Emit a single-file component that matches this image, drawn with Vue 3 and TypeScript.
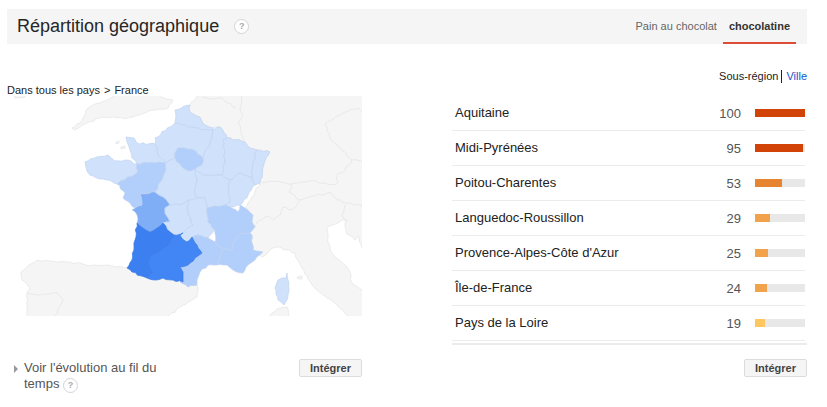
<script setup lang="ts">
interface Row { name: string; value: number; color: string }

const rows: Row[] = [
  { name: 'Aquitaine', value: 100, color: '#d14306' },
  { name: 'Midi-Pyrénées', value: 95, color: '#d14306' },
  { name: 'Poitou-Charentes', value: 53, color: '#e78432' },
  { name: 'Languedoc-Roussillon', value: 29, color: '#f2a24a' },
  { name: "Provence-Alpes-Côte d'Azur", value: 25, color: '#f2a24a' },
  { name: 'Île-de-France', value: 24, color: '#f2a24a' },
  { name: 'Pays de la Loire', value: 19, color: '#fdc660' },
]

// breaks a straight edge into small steps so coasts and borders look hand drawn.
// offsets depend only on the two end points, so neighbouring regions share the same edge
function rough(points: string, closed = true, amp = 1): string {
  const pts = points.split(' ').map((p) => p.split(',').map(Number))
  const out: string[] = []
  const last = closed ? pts.length : pts.length - 1
  for (let i = 0; i < last; i++) {
    const a = pts[i]
    const b = pts[(i + 1) % pts.length]
    out.push(a.join(','))
    const forward = a[0] < b[0] || (a[0] === b[0] && a[1] < b[1])
    const [p, q] = forward ? [a, b] : [b, a]
    const dx = q[0] - p[0]
    const dy = q[1] - p[1]
    const len = Math.hypot(dx, dy)
    const n = Math.floor(len / 3)
    const mids: string[] = []
    for (let k = 1; k < n; k++) {
      const s = Math.sin(p[0] * 12.9 + p[1] * 78.2 + q[0] * 37.7 + q[1] * 11.1 + k * 3.3) * 43758.5
      const off = (s - Math.floor(s) - 0.5) * 2 * amp
      const x = p[0] + (dx * k) / n - (dy / len) * off
      const y = p[1] + (dy * k) / n + (dx / len) * off
      mids.push(x.toFixed(1) + ',' + y.toFixed(1))
    }
    out.push(...(forward ? mids : mids.reverse()))
  }
  if (!closed) out.push(pts[pts.length - 1].join(','))
  return out.join(' ')
}

// coordinates are page pixels, the svg viewBox starts at the map's corner
const land = [
  '13,92 25,92 25,97 15,98',
  '113,92 160,92 160,97 173,100 168,108 147,112 133,117 117,118 103,117 87,123 75,130 72,128 80,123 88,108 100,103 113,97',
  '202,92 370,92 370,250 362,248 358,236 355,240 347,234 345,223 347,220 342,220 333,225 327,228 328,238 330,250 335,257 345,265 350,272 352,283 362,290 370,292 370,322 352,322 343,310 327,298 312,285 302,268 295,253 280,247 273,248 262,257 253,250 252,235 250,233 255,227 252,222 253,215 245,208 260,183 263,167 270,152 250,148 245,142 227,138 220,127 213,128 205,125 200,117 190,112 190,105',
  '37,260 70,262 90,266 107,265 127,268 132,272 147,278 155,280 163,278 173,280 183,282 188,287 197,285 198,288 197,297 180,307 162,322 28,322 27,293 30,288 22,280 21,272',
  '268,322 270,315 277,309 287,307 292,322',
  '116,142 119,141 119,143 116,144',
  '121,147 125,146 125,148 121,149',
  '297,277 302,276 302,279 298,279',
].map((p) => rough(p))

const borders = [
  '242,96 240,108 243,115 238,122 241,132 245,142',
  '202,97 212,99 222,98 236,108',
  '325,124 345,112 358,108 362,112',
  '325,124 330,138 340,148 352,160 362,161',
  '352,160 345,170 336,176 338,182 335,185 310,181 292,184',
  '292,184 272,181 262,183',
  '292,184 289,192 300,200 330,192 337,200 362,206',
  '300,200 296,207 292,210 283,207 280,215 273,220 268,216 257,222 255,227',
  '345,205 342,215 347,222',
  '27,293 37,295 57,293 63,300 55,316',
].map((p) => rough(p, false))

const tints: Record<string, string> = {
  light: '#d0e1fc',
  mid: '#b2cefb',
  strong: '#7fadf6',
  full: '#3b7ff0',
  high: '#4285f4',
}

const regions: { tint: string; points: string }[] = [
  { tint: 'light', points: '175,110 190,105 190,112 200,117 205,125 213,128 213,130 195,128 175,123' },
  { tint: 'light', points: '155,138 173,125 175,123 195,128 213,130 212,138 203,158 193,150 178,148 175,153 175,158 166,163 158,155 155,144' },
  { tint: 'light', points: '126,137 134,138 137,143 155,144 158,155 166,163 155,163 147,163 137,164 132,158 130,150 127,142' },
  { tint: 'light', points: '85,162 97,157 108,155 115,161 125,160 137,164 138,172 117,184 107,180 103,179 90,175 86,167' },
  { tint: 'mid', points: '137,164 147,163 155,163 166,163 166,170 160,182 155,192 140,194 142,205 135,208 123,198 125,193 117,184 138,172' },
  { tint: 'light', points: '166,163 175,158 182,167 190,171 195,169 197,182 195,192 197,198 188,200 180,205 170,205 163,197 155,192 160,182 166,170' },
  { tint: 'mid', points: '175,153 178,148 193,150 203,158 202,165 195,169 190,171 182,167 175,158' },
  { tint: 'light', points: '213,130 220,127 227,138 223,140 225,160 222,175 217,175 203,175 195,169 202,165 203,158 212,138' },
  { tint: 'light', points: '223,140 227,138 245,142 250,148 257,150 253,162 252,178 240,173 230,180 222,175 225,160' },
  { tint: 'light', points: '257,150 270,152 263,167 260,183 255,185 252,178 253,162' },
  { tint: 'light', points: '195,169 203,175 217,175 222,175 230,180 228,192 230,202 225,205 207,208 205,198 197,198 195,192 197,182' },
  { tint: 'light', points: '230,180 240,173 252,178 255,185 248,195 240,205 230,207 225,205 230,202 228,192' },
  { tint: 'strong', points: '140,194 155,192 163,197 170,205 165,208 165,213 170,222 163,223 157,228 150,232 143,228 137,223 137,215 132,210 135,208 142,205' },
  { tint: 'light', points: '170,205 180,205 188,200 188,213 193,225 183,233 174,235 170,232 163,223 170,222 165,213 165,208' },
  { tint: 'light', points: '188,200 197,198 205,198 207,208 207,213 208,222 215,230 208,238 197,235 192,237 187,242 180,235 183,233 193,225 188,213' },
  { tint: 'mid', points: '207,208 225,205 230,207 238,212 240,205 245,208 253,215 252,222 255,227 250,233 242,233 233,242 233,250 222,248 215,242 215,230 208,222 207,213' },
  { tint: 'mid', points: '250,233 252,235 253,250 263,252 255,260 248,265 243,273 233,270 227,265 217,265 222,248 233,250 233,242 242,233' },
  { tint: 'mid', points: '197,235 208,238 215,242 222,248 217,265 208,265 200,272 197,280 197,285 188,287 180,282 183,280 183,272 180,267 188,265 195,258 202,253 197,245 192,237' },
  { tint: 'full', points: '137,223 143,228 150,232 157,228 163,223 170,232 174,235 168,245 157,253 150,257 148,263 153,272 147,278 132,272 127,268 132,260 135,240' },
  { tint: 'high', points: '174,235 183,233 180,235 187,242 192,237 197,245 202,253 195,258 188,265 180,267 183,272 183,280 183,282 173,280 163,278 155,280 147,278 153,272 148,263 150,257 157,253 168,245' },
  { tint: 'light', points: '287,273 289,283 288,295 284,305 278,300 275,288 278,280 286,278' },
]

const regionShapes = regions.map((r) => ({ tint: r.tint, points: rough(r.points) }))
</script>

<template>
  <div class="page">
    <header class="head">
      <h2 class="head__title">Répartition géographique</h2>
      <span class="help help--head">?</span>
      <nav class="tabs">
        <span class="tab">Pain au chocolat</span>
        <span class="tab tab--on">chocolatine</span>
      </nav>
    </header>

    <div class="cols">
      <section class="left">
        <div class="crumb">Dans tous les pays<span class="crumb__sep">&gt;</span>France</div>
        <svg class="map" viewBox="7 96 355 220" width="355" height="220">
          <polygon v-for="(p, i) in land" :key="'l' + i" :points="p" fill="#f5f5f5" stroke="#e6e6e6" stroke-width="0.8" />
          <polyline v-for="(p, i) in borders" :key="'b' + i" :points="p" fill="none" stroke="#e4e4e4" stroke-width="0.8" />
          <polygon
            v-for="(r, i) in regionShapes"
            :key="'r' + i"
            :points="r.points"
            :fill="tints[r.tint]"
            :stroke="r.tint === 'full' || r.tint === 'high' ? '#3a7ae6' : '#c0d2ef'"
            stroke-width="0.7"
          />
        </svg>
        <div class="foot">
          <div class="evo">
            <span class="evo__arrow"></span>
            <span class="evo__text">Voir l'évolution au fil du temps <span class="help help--evo">?</span></span>
          </div>
          <button class="embed">Intégrer</button>
        </div>
      </section>

      <section class="right">
        <div class="switch">
          <span class="switch__on">Sous-région</span>
          <span class="switch__link">Ville</span>
        </div>
        <ul class="list">
          <li v-for="row in rows" :key="row.name" class="row">
            <span class="row__name">{{ row.name }}</span>
            <span class="row__value">{{ row.value }}</span>
            <span class="row__track">
              <span class="row__fill" :style="{ width: row.value + '%', background: row.color }"></span>
            </span>
          </li>
        </ul>
        <div class="list-end"></div>
        <div class="foot foot--right">
          <button class="embed">Intégrer</button>
        </div>
      </section>
    </div>
  </div>
</template>

<style scoped>
.page {
  width: 827px;
  height: 407px;
  overflow: hidden;
  padding-top: 9px;
  box-sizing: border-box;
  font-family: "Liberation Sans", Arial, sans-serif;
  color: #222;
  background: #fff;
}

.head {
  display: flex;
  align-items: center;
  width: 800px;
  height: 35px;
  margin-left: 7px;
  background: #f5f5f5;
}

.head__title {
  margin: 0 0 0 10px;
  font-size: 18px;
  font-weight: 400;
  color: #262626;
}

.help {
  display: inline-block;
  box-sizing: border-box;
  width: 15px;
  height: 15px;
  border: 1px solid #d4d4d4;
  border-radius: 50%;
  background: #fff;
  color: #aaa;
  font-size: 9px;
  font-weight: 700;
  line-height: 13px;
  text-align: center;
}

.help--head {
  margin-left: 15px;
}

.tabs {
  display: flex;
  height: 100%;
  margin-left: auto;
  margin-right: 11px;
}

.tab {
  padding: 0 6px;
  font-size: 11px;
  line-height: 35px;
  color: #666;
}

.tab--on {
  box-sizing: border-box;
  height: 35px;
  padding: 0 6px;
  font-weight: 700;
  color: #333;
  border-bottom: 2px solid #dd4b39;
}

.cols {
  display: flex;
  gap: 90px;
  margin-left: 7px;
}

.left,
.right {
  width: 355px;
}

.crumb {
  margin-top: 40px;
  height: 12px;
  font-size: 11px;
  line-height: 13px;
  color: #222;
}

.crumb__sep {
  margin: 0 4px;
}

.map {
  display: block;
}

.foot {
  display: flex;
  justify-content: space-between;
  align-items: flex-start;
  margin-top: 43px;
}

.foot--right {
  justify-content: flex-end;
  margin-top: 14px;
}

.evo {
  display: flex;
  width: 150px;
  margin-top: 1px;
  padding-left: 7px;
}

.evo__arrow {
  flex: none;
  width: 0;
  height: 0;
  margin: 5px 6px 0 0;
  border-left: 4px solid #999;
  border-top: 4px solid transparent;
  border-bottom: 4px solid transparent;
}

.evo__text {
  font-size: 13px;
  line-height: 16px;
  color: #555;
}

.embed {
  width: 63px;
  height: 18px;
  padding: 0;
  border: 1px solid #dcdcdc;
  border-radius: 2px;
  background: #f5f5f5;
  color: #444;
  font-family: inherit;
  font-size: 11px;
  font-weight: 700;
}

.switch {
  display: flex;
  justify-content: flex-end;
  align-items: center;
  height: 14px;
  margin-top: 25px;
  margin-bottom: 13px;
  font-size: 11px;
}

.switch__on {
  padding-right: 3px;
  border-right: 1px solid #222;
  line-height: 13px;
}

.switch__link {
  padding-left: 4px;
  color: #1155cc;
}

.list {
  width: 353px;
  margin: 0;
  padding: 0;
  list-style: none;
}

.row {
  display: flex;
  align-items: center;
  box-sizing: border-box;
  height: 35px;
  padding: 0 0 0 3px;
  border-bottom: 1px solid #ececec;
  font-size: 13px;
}

.row__name {
  flex: 1;
  margin-top: -2px;
  color: #222;
}

.row__value {
  width: 40px;
  text-align: right;
  color: #555;
}

.row__track {
  display: block;
  width: 50px;
  height: 8px;
  margin-left: 14px;
  background: #e8e8e8;
}

.row__fill {
  display: block;
  height: 100%;
}

.list-end {
  width: 355px;
  height: 2px;
  margin-top: 2px;
  background: #ececec;
}
</style>
